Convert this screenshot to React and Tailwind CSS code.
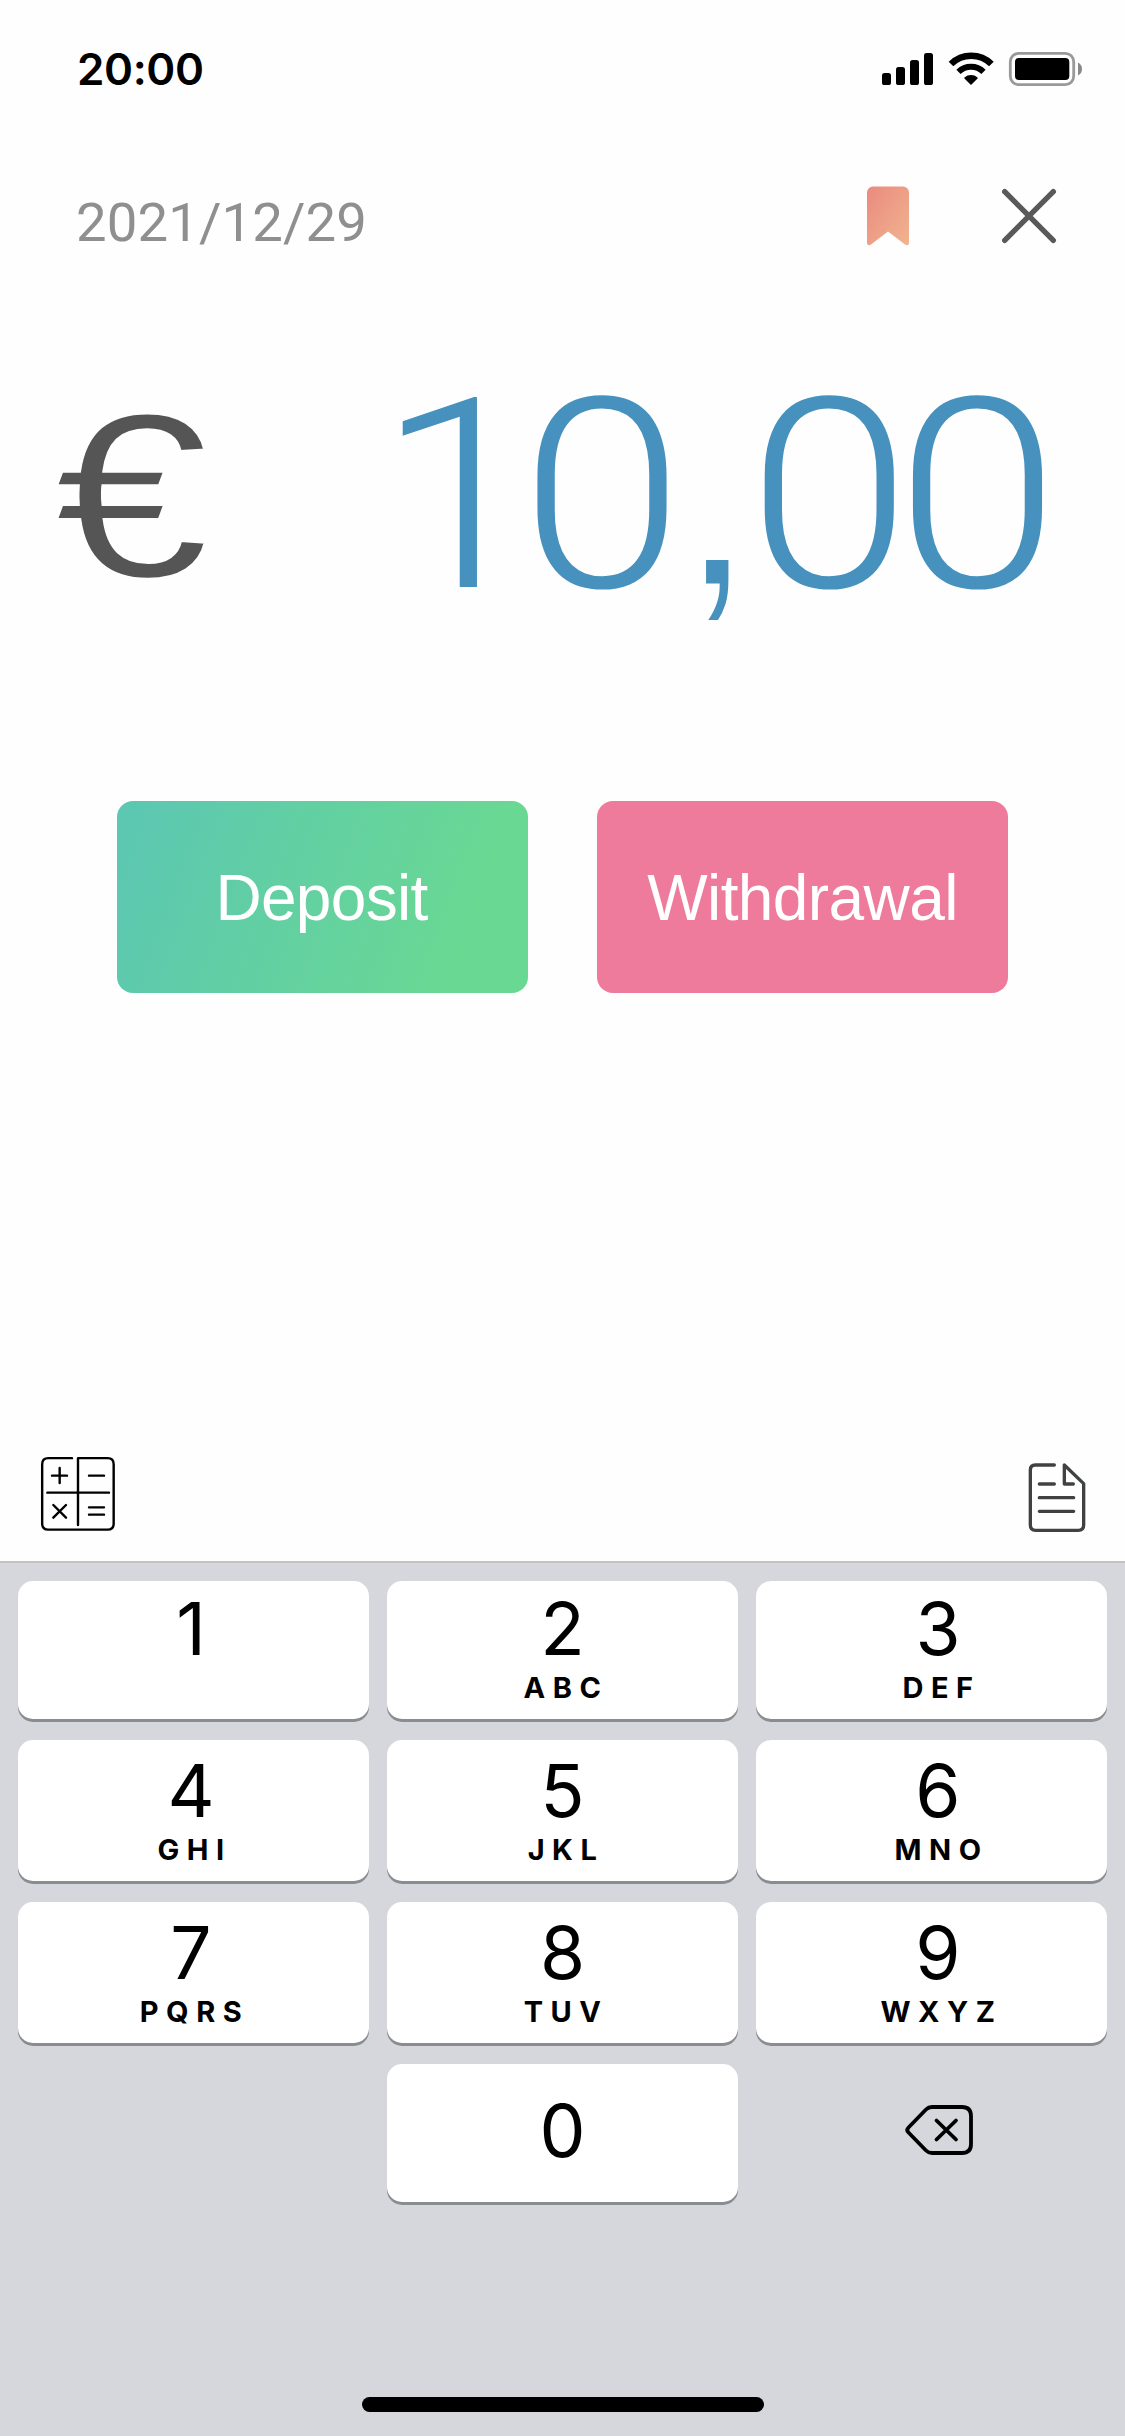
const KEYS = [
  ["1", ""], ["2", "ABC"], ["3", "DEF"],
  ["4", "GHI"], ["5", "JKL"], ["6", "MNO"],
  ["7", "PQRS"], ["8", "TUV"], ["9", "WXYZ"],
];

const COLUMN_PADDING = ["pr-[5px]", "", "pl-[13px]"];

function StatusBar() {
  return (
    <div className="flex h-[138px] items-center justify-between pl-[77px] pr-[43px] font-['Inter',sans-serif]">
      <span className="text-[44px] leading-none font-semibold tracking-[-0.4px] text-black">20:00</span>
      <svg width="202" height="36" viewBox="880 51 202 36">
        <rect x="882" y="73" width="9" height="12" rx="2.6" />
        <rect x="896" y="67" width="9" height="18" rx="2.6" />
        <rect x="910" y="60" width="9" height="25" rx="2.6" />
        <rect x="924" y="53" width="9" height="32" rx="2.6" />
        <path d="M971 84 L965 78 A9 9 0 0 1 977 78 Z" strokeWidth="1.5" stroke="#000" strokeLinejoin="round" />
        <path d="M958.500 71.800 A17.8 17.8 0 0 1 983.500 71.800" fill="none" stroke="#000" strokeWidth="6" />
        <path d="M951 64 A28.8 28.8 0 0 1 991.4 64" fill="none" stroke="#000" strokeWidth="6.6" />
        <rect x="1010.3" y="53.3" width="63.4" height="31.4" rx="8.5" fill="none" stroke="#999" strokeWidth="2.8" />
        <rect x="1015" y="58" width="54.3" height="22" rx="4" />
        <path d="M1078 62.5 Q1082 64.5 1082 69 Q1082 73.500 1078 75.500 Z" fill="#888" />
      </svg>
    </div>
  );
}

function Header() {
  return (
    <div className="flex h-[156px] items-center justify-between pl-[76px] pr-[67px]">
      <span className="mt-[12px] font-['Roboto',sans-serif] text-[54.5px] leading-none tracking-[0.1px] text-[#8f8f8f]">2021/12/29</span>
      <svg width="192" height="62" viewBox="866 185 192 62">
        <defs>
          <linearGradient id="bookmark" x1="0" y1="0" x2="1" y2="1">
            <stop offset="0.05" stopColor="#eb8c80" />
            <stop offset="1" stopColor="#f0b48f" />
          </linearGradient>
        </defs>
        <path d="M867 192.500 a6 6 0 0 1 6 -6 h30 a6 6 0 0 1 6 6 V242.500 Q909 246.500 905 244.500 L888 231.500 L871 244.500 Q867 246.500 867 242.500 Z" fill="url(#bookmark)" />
        <path d="M1004.700 191.700 L1053.300 240.300 M1053.300 191.700 L1004.700 240.300" stroke="#595959" strokeWidth="5.400" strokeLinecap="round" />
      </svg>
    </div>
  );
}

function Amount() {
  return (
    <div className="flex h-[396px] items-start justify-between pl-[54px] pr-[81px]">
      <span className="mt-[86px] origin-left scale-x-[1.19] font-['Liberation_Sans',sans-serif] text-[235px] leading-[231px] text-[#555] [-webkit-text-stroke:3px_#fefefe]">€</span>
      <span className="mt-[60px] origin-right scale-x-[1.11] font-['Roboto',sans-serif] text-[266px] leading-[284px] font-light tracking-[-14px] text-[#4791be]">
        <span className="mr-[-4.5px]">1</span>0<span className="mr-[2px] ml-[4px] font-['Liberation_Sans',sans-serif] text-[285px] leading-[0px] [-webkit-text-stroke:7px_#fefefe]">,</span>00
      </span>
    </div>
  );
}

function Actions() {
  return (
    <div className="grid h-[192px] grid-cols-2 gap-[69px] px-[117px] font-['Liberation_Sans',sans-serif] text-[64px] leading-none text-white">
      <button className="rounded-[16px] bg-[linear-gradient(110deg,#5cc7b2_2%,#69d893_82%)] pt-[2px] pr-[2px] tracking-[-0.7px]">Deposit</button>
      <button className="rounded-[16px] bg-[#ee7b9b] pt-[2px] tracking-[-0.6px]">Withdrawal</button>
    </div>
  );
}

function Toolbar() {
  return (
    <div className="flex flex-1 items-end justify-between pr-[39px] pb-[27px] pl-10">
      <svg className="mb-[2px]" width="76" height="76" viewBox="120 78 228 228" fill="none" stroke="#000" strokeWidth="7.200" strokeLinecap="round" strokeLinejoin="round">
        <path d="M216 84.500 H145 Q126.500 84.500 126.500 103 V281 Q126.500 299 145 299 H323 Q341 299 341 281 V103 Q341 84.500 323 84.500 H234 V285" />
        <path d="M142 188 H327 M156 137 H201 M179 114 V159 M267 137 H312 M160 225 L198 263 M198 225 L160 263 M267 232 H312 M267 254 H312" />
      </svg>
      <svg width="58" height="72" viewBox="864 96 174 216" fill="none" stroke="#404242" strokeWidth="10" strokeLinecap="round" strokeLinejoin="round">
        <path d="M943 105 H886 Q871 105 871 120 V285 Q871 301 887 301 H1015 Q1031 301 1031 285 V161 L973 105 V162 H1000" />
        <path d="M898 162 H943 M898 203 H1001 M898 244 H1001" />
      </svg>
    </div>
  );
}

function Key({ digit, letters, padding }) {
  return (
    <button className={`flex flex-col items-center justify-end rounded-[15px] bg-white pb-[21px] shadow-[0_3px_0_#8b8c90] ${padding}`}>
      <span className="text-[73px] leading-[53px]">{digit}</span>
      <span className="mt-[22px] h-[21px] pl-[7px] text-[29px] leading-[21px] font-bold tracking-[7.500px]">{letters}</span>
    </button>
  );
}

function Keypad() {
  return (
    <div className="flex h-[875px] flex-col items-center border-t-2 border-[#c2c2c5] bg-[#d6d7dc] px-[18px] pt-[18px] font-['Inter',sans-serif] text-black">
      <div className="grid w-full grid-cols-3 grid-rows-[138px_141px_141px_138px] gap-x-[18px] gap-y-[21px]">
        {KEYS.map(([digit, letters], index) => (
          <Key key={digit} digit={digit} letters={letters} padding={COLUMN_PADDING[index % 3]} />
        ))}
        <button className="col-start-2 flex items-start justify-center rounded-[15px] bg-white pt-10 text-[73px] leading-[53px] shadow-[0_3px_0_#8b8c90]">0</button>
        <div className="flex items-start justify-center pt-[39px] pl-[15px]">
          <svg width="72" height="54" viewBox="903 2103 72 54" fill="none" stroke="#000" strokeWidth="3.800" strokeLinecap="round" strokeLinejoin="round">
            <path d="M932 2107 H962 Q971 2107 971 2116 V2144 Q971 2153 962 2153 H932 Q928.500 2153 926 2150.500 L908.500 2132.500 Q906 2130 908.500 2127.500 L926 2109.500 Q928.500 2107 932 2107 Z" />
            <path d="M936.500 2120.500 L956 2139.500 M956 2120.500 L936.500 2139.500" />
          </svg>
        </div>
      </div>
      <div className="mt-auto mb-6 h-[15px] w-[402px] rounded-full bg-black" />
    </div>
  );
}

export default function App() {
  return (
    <div className="flex h-[2436px] w-full flex-col overflow-hidden bg-[#fefefe]">
      <StatusBar />
      <Header />
      <Amount />
      <div className="h-[111px]" />
      <Actions />
      <Toolbar />
      <Keypad />
    </div>
  );
}
